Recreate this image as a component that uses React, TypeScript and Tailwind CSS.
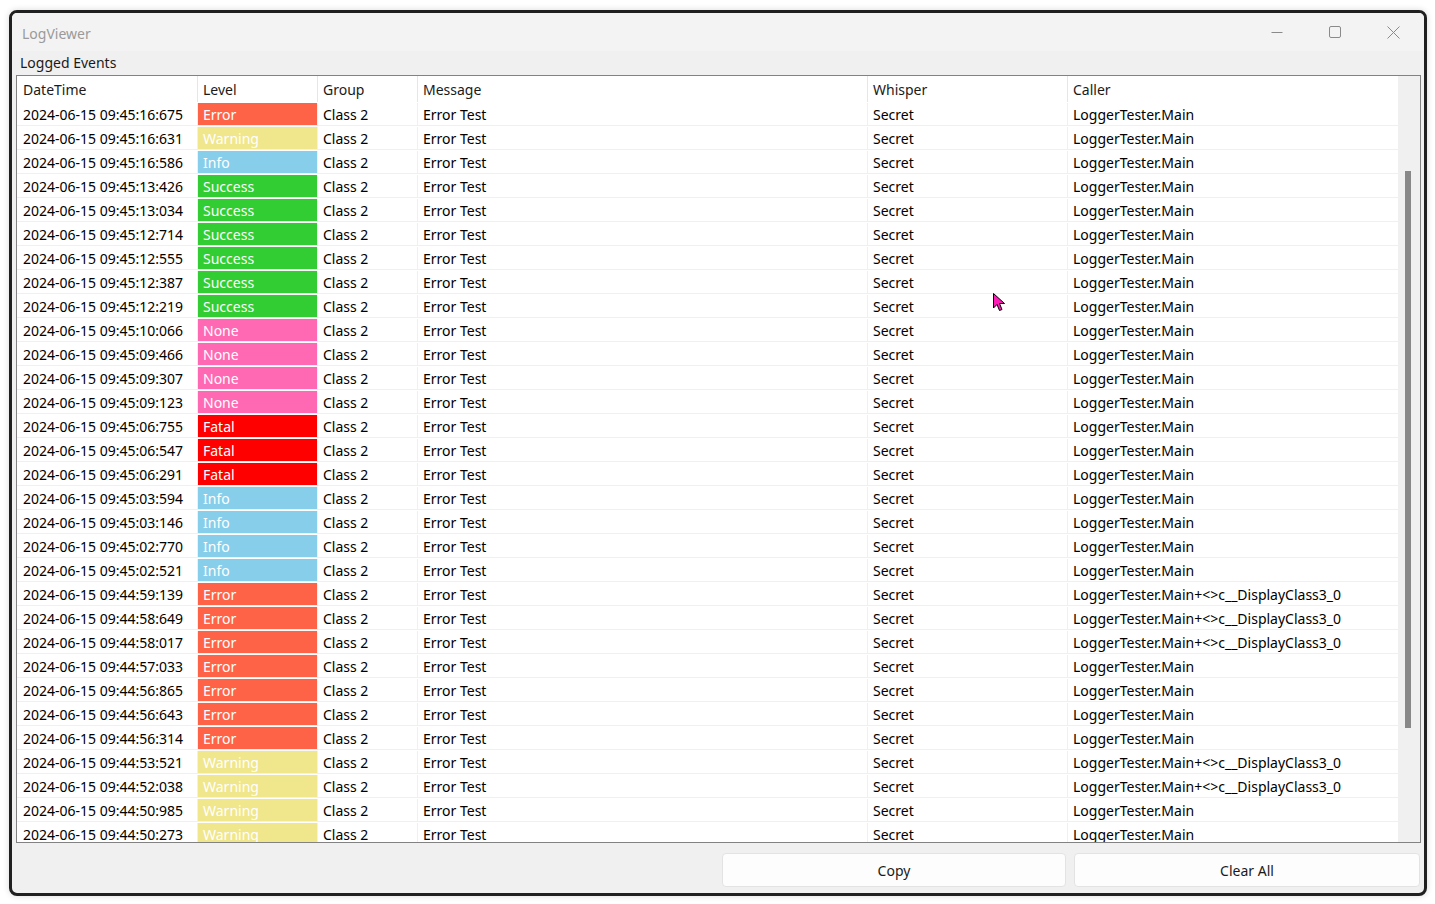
import type { ReactNode } from 'react';

type Level = 'Error' | 'Warning' | 'Info' | 'Success' | 'None' | 'Fatal';

const LEVEL_BG: Record<Level, string> = {
  Error: 'bg-[#ff6347]',
  Warning: 'bg-[#f0e68c]',
  Info: 'bg-[#87ceeb]',
  Success: 'bg-[#32cd32]',
  None: 'bg-[#ff69b4]',
  Fatal: 'bg-[#ff0000]',
};

const MAIN = 'LoggerTester.Main';
const DISPLAY = 'LoggerTester.Main+<>c__DisplayClass3_0';

const EVENTS: [string, Level, string][] = [
  ['2024-06-15 09:45:16:675', 'Error', MAIN],
  ['2024-06-15 09:45:16:631', 'Warning', MAIN],
  ['2024-06-15 09:45:16:586', 'Info', MAIN],
  ['2024-06-15 09:45:13:426', 'Success', MAIN],
  ['2024-06-15 09:45:13:034', 'Success', MAIN],
  ['2024-06-15 09:45:12:714', 'Success', MAIN],
  ['2024-06-15 09:45:12:555', 'Success', MAIN],
  ['2024-06-15 09:45:12:387', 'Success', MAIN],
  ['2024-06-15 09:45:12:219', 'Success', MAIN],
  ['2024-06-15 09:45:10:066', 'None', MAIN],
  ['2024-06-15 09:45:09:466', 'None', MAIN],
  ['2024-06-15 09:45:09:307', 'None', MAIN],
  ['2024-06-15 09:45:09:123', 'None', MAIN],
  ['2024-06-15 09:45:06:755', 'Fatal', MAIN],
  ['2024-06-15 09:45:06:547', 'Fatal', MAIN],
  ['2024-06-15 09:45:06:291', 'Fatal', MAIN],
  ['2024-06-15 09:45:03:594', 'Info', MAIN],
  ['2024-06-15 09:45:03:146', 'Info', MAIN],
  ['2024-06-15 09:45:02:770', 'Info', MAIN],
  ['2024-06-15 09:45:02:521', 'Info', MAIN],
  ['2024-06-15 09:44:59:139', 'Error', DISPLAY],
  ['2024-06-15 09:44:58:649', 'Error', DISPLAY],
  ['2024-06-15 09:44:58:017', 'Error', DISPLAY],
  ['2024-06-15 09:44:57:033', 'Error', MAIN],
  ['2024-06-15 09:44:56:865', 'Error', MAIN],
  ['2024-06-15 09:44:56:643', 'Error', MAIN],
  ['2024-06-15 09:44:56:314', 'Error', MAIN],
  ['2024-06-15 09:44:53:521', 'Warning', DISPLAY],
  ['2024-06-15 09:44:52:038', 'Warning', DISPLAY],
  ['2024-06-15 09:44:50:985', 'Warning', MAIN],
  ['2024-06-15 09:44:50:273', 'Warning', MAIN],
];

const COLS = 'grid grid-cols-[180px_120px_100px_450px_200px_330px]';

function Cell({ children, first, className = '' }: { children: ReactNode; first?: boolean; className?: string }) {
  return (
    <div
      className={`flex items-center whitespace-nowrap overflow-hidden ${
        first ? 'pl-[6px]' : 'border-l border-[#f0f0f0] pl-[5px]'
      } ${className}`}
    >
      {children}
    </div>
  );
}

function WindowControls() {
  return (
    <div className="flex items-center h-full text-[#8a8a8a]">
      <div className="w-[58px] flex justify-center">
        <svg width="12" height="12" viewBox="0 0 12 12">
          <path d="M0.5 6.5h11" stroke="currentColor" strokeWidth="1" />
        </svg>
      </div>
      <div className="w-[58px] flex justify-center">
        <svg width="12" height="12" viewBox="0 0 12 12">
          <rect x="0.5" y="0.5" width="11" height="11" rx="1.5" fill="none" stroke="currentColor" strokeWidth="1" />
        </svg>
      </div>
      <div className="w-[58px] flex justify-center">
        <svg width="13" height="13" viewBox="0 0 13 13">
          <path d="M0.5 0.5l12 12M12.5 0.5l-12 12" stroke="currentColor" strokeWidth="1" />
        </svg>
      </div>
    </div>
  );
}

export default function App() {
  return (
    <div className="w-[1435px] h-[904px] bg-white pt-[10px] pl-[9px] font-['Noto_Sans',sans-serif] text-[14px] text-black">
      <div className="relative w-[1418px] h-[886px] border-[3px] border-[#202020] rounded-[8px] overflow-hidden bg-[#f0f0f0] flex flex-col shadow-[0_0_6px_rgba(0,0,0,0.15)]">
        {/* title bar */}
        <div className="h-[38px] shrink-0 bg-[#f3f3f3] flex items-center justify-between">
          <span className="pl-[10px] text-[#9a9a9a] pt-[2px]">LogViewer</span>
          <div className="h-full pr-[2px]">
            <WindowControls />
          </div>
        </div>

        <div className="h-[24px] shrink-0 flex items-center pl-[8px] pb-[2px] text-[#1a1a1a]">Logged Events</div>

        {/* list */}
        <div className="ml-[4px] mr-[3px] h-[768px] shrink-0 border border-[#828282] bg-white flex overflow-hidden">
          <div className="w-[1381px] shrink-0 flex flex-col overflow-hidden">
            <div className={`${COLS} h-[26px] shrink-0`}>
              {['DateTime', 'Level', 'Group', 'Message', 'Whisper', 'Caller'].map((h, i) => (
                <div
                  key={h}
                  className={`flex items-center text-[#1a1a1a] ${
                    i === 0 ? 'pl-[6px]' : 'border-l border-[#e6e6e6] pl-[5px]'
                  }`}
                >
                  {h}
                </div>
              ))}
            </div>
            {EVENTS.map(([time, level, caller]) => (
              <div key={time} className={`${COLS} h-[24px] shrink-0 border-b border-[#f0f0f0] pt-[1px]`}>
                <Cell first>{time}</Cell>
                <Cell className={`${LEVEL_BG[level]} text-white`}>{level}</Cell>
                <Cell>Class 2</Cell>
                <Cell>Error Test</Cell>
                <Cell>Secret</Cell>
                <Cell>{caller}</Cell>
              </div>
            ))}
          </div>
          <div className="flex-1 bg-[#f0f0f0] flex justify-center pt-[95px]">
            <div className="w-[6px] h-[557px] bg-[#888888] ml-[-2px]" />
          </div>
        </div>

        {/* buttons */}
        <div className="flex-1 flex justify-end items-start gap-[8px] pt-[10px] pr-[4px]">
          <button className="w-[344px] h-[34px] bg-[#fdfdfd] border border-[#e3e3e3] rounded-[4px] text-[#1a1a1a]">
            Copy
          </button>
          <button className="w-[346px] h-[34px] bg-[#fdfdfd] border border-[#e3e3e3] rounded-[4px] text-[#1a1a1a]">
            Clear All
          </button>
        </div>

        {/* mouse cursor */}
        <svg
          className="absolute left-[981px] top-[280px]"
          width="13"
          height="19"
          viewBox="0 0 13 19"
        >
          <path
            d="M0.5 0.5 L0.5 15 L4 11.5 L6.5 17.5 L9 16.5 L6.5 10.5 L11.5 10.5 Z"
            fill="#ff1ab8"
            stroke="#000"
            strokeWidth="1"
          />
        </svg>
      </div>
    </div>
  );
}
